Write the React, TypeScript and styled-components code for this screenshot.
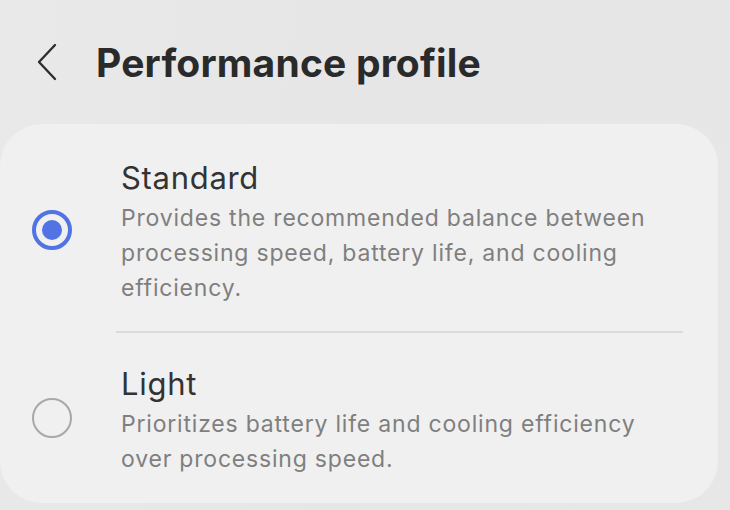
import { createGlobalStyle, styled } from "styled-components";

const GlobalStyle = createGlobalStyle`
  html, body {
    margin: 0;
    padding: 0;
  }
  body {
    width: 730px;
    height: 510px;
    overflow: hidden;
    background: linear-gradient(100deg, #e9e9e9 0%, #e6e6e6 50%, #e8e7e7 100%);
    font-family: Inter, "Noto Sans", sans-serif;
  }
`;

const Page = styled.div`
  display: flex;
  flex-direction: column;
  height: 510px;
`;

const Header = styled.div`
  display: flex;
  align-items: center;
  height: 124px;
  padding-left: 30px;
  gap: 32px;
  box-sizing: border-box;
`;

const BackButton = styled.button`
  border: none;
  background: none;
  padding: 0;
  width: 34px;
  height: 40px;
  display: flex;
  align-items: center;
  justify-content: center;
`;

const Title = styled.h1`
  margin: 0;
  font-size: 39px;
  font-weight: 700;
  color: #2a2a2a;
  letter-spacing: 0.2px;
`;

const Card = styled.div`
  width: 718px;
  height: 379px;
  background: #f1f0f0;
  border-radius: 42px;
  box-sizing: border-box;
  display: flex;
  flex-direction: column;
`;

const Option = styled.div<{ $top: number; $height: number }>`
  display: flex;
  align-items: center;
  height: ${(p) => p.$height}px;
  padding-top: ${(p) => p.$top}px;
  box-sizing: border-box;
`;

const RadioCell = styled.div<{ $shift: number }>`
  width: 121px;
  display: flex;
  justify-content: center;
  padding-right: 17px;
  margin-top: ${(p) => p.$shift}px;
  box-sizing: border-box;
`;

const Radio = styled.span<{ $checked?: boolean }>`
  width: 40px;
  height: 40px;
  border-radius: 50%;
  box-sizing: border-box;
  border: ${(p) => (p.$checked ? "4px solid #5173e4" : "2.5px solid #a8a8a8")};
  display: flex;
  align-items: center;
  justify-content: center;
  &::after {
    content: "";
    display: ${(p) => (p.$checked ? "block" : "none")};
    width: 20px;
    height: 20px;
    border-radius: 50%;
    background: #5173e4;
  }
`;

const Texts = styled.div`
  flex: 1;
  display: flex;
  flex-direction: column;
`;

const OptionTitle = styled.div`
  font-size: 31px;
  line-height: 38px;
  color: #333333;
  letter-spacing: 0.7px;
  margin-bottom: 4px;
`;

const OptionDesc = styled.div`
  font-size: 23px;
  line-height: 35px;
  color: #7f7f7f;
  letter-spacing: 0.8px;
  padding-right: 40px;
`;

const Divider = styled.div`
  height: 1.5px;
  background: #dcdbdb;
  margin-left: 116px;
  margin-right: 35px;
`;

export default function App() {
  return (
    <>
      <GlobalStyle />
      <Page>
        <Header>
          <BackButton aria-label="Back">
            <svg width="24" height="38" viewBox="0 0 24 38">
              <path
                d="M20 2 L4 19 L20 36"
                fill="none"
                stroke="#2e2e2e"
                strokeWidth="2.4"
                strokeLinecap="round"
                strokeLinejoin="round"
              />
            </svg>
          </BackButton>
          <Title>Performance profile</Title>
        </Header>
        <Card>
          <Option $top={10} $height={207}>
            <RadioCell $shift={-6}>
              <Radio $checked />
            </RadioCell>
            <Texts>
              <OptionTitle>Standard</OptionTitle>
              <OptionDesc>
                Provides the recommended balance between processing speed,
                battery life, and cooling efficiency.
              </OptionDesc>
            </Texts>
          </Option>
          <Divider />
          <Option $top={6} $height={170}>
            <RadioCell $shift={-6}>
              <Radio />
            </RadioCell>
            <Texts>
              <OptionTitle>Light</OptionTitle>
              <OptionDesc>
                Prioritizes battery life and cooling efficiency over processing
                speed.
              </OptionDesc>
            </Texts>
          </Option>
        </Card>
      </Page>
    </>
  );
}
